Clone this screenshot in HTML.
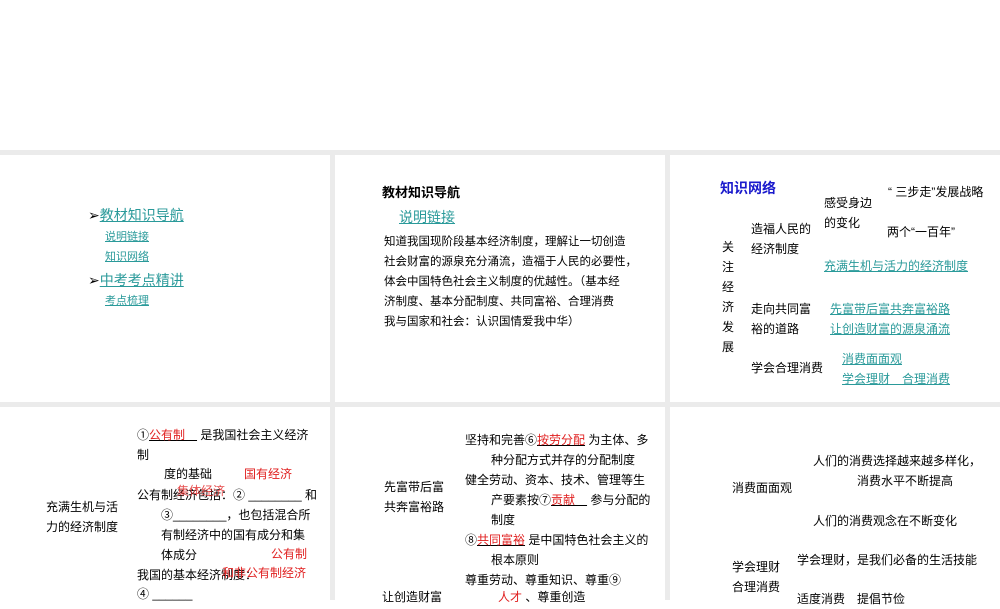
<!DOCTYPE html>
<html><head><meta charset="utf-8"><style>
body{margin:0;width:1000px;height:600px;background:#fff;position:relative;overflow:hidden;font-family:"Liberation Sans","Noto Sans CJK SC",sans-serif;color:#000}
.g{position:absolute;background:#ebebeb}
.t{position:absolute;white-space:nowrap;font-size:12px;line-height:20px}
.l{color:#2a9a9a;text-decoration:underline}
.r{color:#e02020}
.b{font-weight:bold}
</style></head><body>
<div class="g" style="left:0;top:150px;width:1000px;height:5px"></div>
<div class="g" style="left:0;top:402px;width:1000px;height:5px"></div>
<div class="g" style="left:330px;top:150px;width:5px;height:450px"></div>
<div class="g" style="left:665px;top:150px;width:5px;height:450px"></div>

<!-- panel 1 -->
<div class="t" style="left:88px;top:205px;font-size:14px">➢<span class="l">教材知识导航</span></div>
<div class="t l" style="left:105px;top:227px;font-size:11px">说明链接</div>
<div class="t l" style="left:105px;top:247px;font-size:11px">知识网络</div>
<div class="t" style="left:88px;top:270px;font-size:14px">➢<span class="l">中考考点精讲</span></div>
<div class="t l" style="left:105px;top:291px;font-size:11px">考点梳理</div>

<!-- panel 2 -->
<div class="t b" style="left:382px;top:183px;font-size:13px">教材知识导航</div>
<div class="t l" style="left:399px;top:207px;font-size:14px">说明链接</div>
<div class="t" style="left:384px;top:232px;font-size:11.5px;line-height:20px">知道我国现阶段基本经济制度，理解让一切创造<br>社会财富的源泉充分涌流，造福于人民的必要性，<br>体会中国特色社会主义制度的优越性。（基本经<br>济制度、基本分配制度、共同富裕、合理消费<br>我与国家和社会：认识国情爱我中华）</div>

<!-- panel 3 -->
<div class="t b" style="left:720px;top:178px;font-size:14px;color:#1a1acc">知识网络</div>
<div class="t" style="left:888px;top:182px">“ 三步走”发展战略</div>
<div class="t" style="left:824px;top:193px;line-height:20px">感受身边<br>的变化</div>
<div class="t" style="left:887px;top:222px">两个“一百年”</div>
<div class="t" style="left:751px;top:219px;line-height:20px">造福人民的<br>经济制度</div>
<div class="t" style="left:722px;top:237px;line-height:20px">关<br>注<br>经<br>济<br>发<br>展</div>
<div class="t l" style="left:824px;top:256px">充满生机与活力的经济制度</div>
<div class="t" style="left:751px;top:299px;line-height:20px">走向共同富<br>裕的道路</div>
<div class="t l" style="left:830px;top:299px">先富带后富共奔富裕路</div>
<div class="t l" style="left:830px;top:319px">让创造财富的源泉涌流</div>
<div class="t" style="left:751px;top:358px">学会合理消费</div>
<div class="t l" style="left:842px;top:349px">消费面面观</div>
<div class="t l" style="left:842px;top:369px">学会理财　合理消费</div>

<!-- panel 4 -->
<div class="t" style="left:46px;top:497px;line-height:20px">充满生机与活<br>力的经济制度</div>
<div class="t" style="left:137px;top:425px;line-height:20px">①<span class="r" style="text-decoration:underline;text-decoration-color:#000">公有制　</span> 是我国社会主义经济<br>制</div>
<div class="t" style="left:164px;top:464px">度的基础</div>
<div class="t r" style="left:244px;top:464px">国有经济</div>
<div class="t" style="left:137px;top:485px">公有制经济包括：② ________ 和</div>
<div class="t r" style="left:177px;top:481px;opacity:.8">集体经济</div>
<div class="t" style="left:161px;top:505px;line-height:20px">③________，也包括混合所<br>有制经济中的国有成分和集<br>体成分</div>
<div class="t r" style="left:271px;top:544px">公有制</div>
<div class="t" style="left:137px;top:565px">我国的基本经济制度：</div>
<div class="t r" style="left:222px;top:563px">和非公有制经济</div>
<div class="t" style="left:137px;top:584px">④ ______</div>

<!-- panel 5 -->
<div class="t" style="left:465px;top:430px">坚持和完善⑥<span class="r" style="text-decoration:underline;text-decoration-color:#000">按劳分配</span> 为主体、多</div>
<div class="t" style="left:491px;top:450px">种分配方式并存的分配制度</div>
<div class="t" style="left:384px;top:477px;line-height:20px">先富带后富<br>共奔富裕路</div>
<div class="t" style="left:465px;top:470px">健全劳动、资本、技术、管理等生</div>
<div class="t" style="left:491px;top:490px">产要素按⑦<span class="r" style="text-decoration:underline;text-decoration-color:#000">贡献　</span> 参与分配的</div>
<div class="t" style="left:491px;top:510px">制度</div>
<div class="t" style="left:465px;top:530px">⑧<span class="r" style="text-decoration:underline;text-decoration-color:#000">共同富裕</span> 是中国特色社会主义的</div>
<div class="t" style="left:491px;top:550px">根本原则</div>
<div class="t" style="left:465px;top:570px">尊重劳动、尊重知识、尊重⑨</div>
<div class="t" style="left:382px;top:587px">让创造财富</div>
<div class="t" style="left:498px;top:587px"><span class="r">人才</span> 、尊重创造</div>

<!-- panel 6 -->
<div class="t" style="left:813px;top:451px">人们的消费选择越来越多样化，</div>
<div class="t" style="left:857px;top:471px">消费水平不断提高</div>
<div class="t" style="left:732px;top:478px">消费面面观</div>
<div class="t" style="left:813px;top:511px">人们的消费观念在不断变化</div>
<div class="t" style="left:797px;top:550px">学会理财，是我们必备的生活技能</div>
<div class="t" style="left:732px;top:557px;line-height:20px">学会理财<br>合理消费</div>
<div class="t" style="left:797px;top:589px">适度消费　提倡节俭</div>
</body></html>
